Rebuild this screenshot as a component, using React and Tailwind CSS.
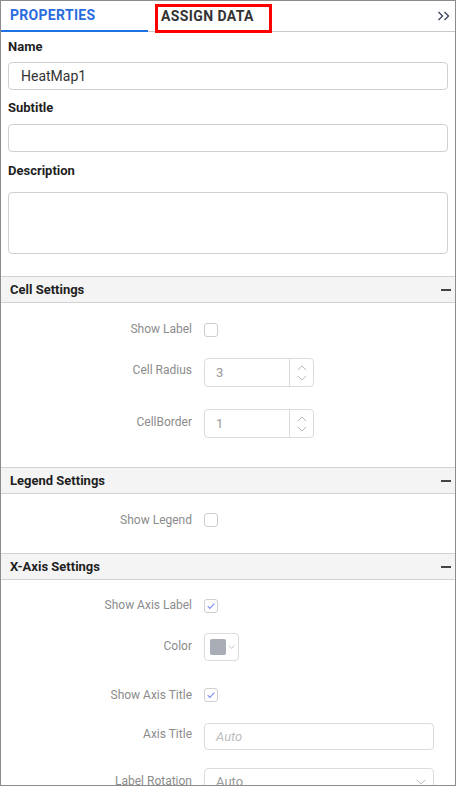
import React from "react";

const font = { fontFamily: "Roboto, 'Liberation Sans', sans-serif" };

const Chevron = ({ dir = "down", className = "" }) => (
  <svg viewBox="0 0 12 7" className={className} fill="none" stroke="currentColor" strokeWidth="1">
    {dir === "down" ? <path d="M1 1l5 5 5-5" /> : <path d="M1 6l5-5 5 5" />}
  </svg>
);

const SectionHeader = ({ title }) => (
  <div className="h-[27px] flex items-center justify-between bg-[#f4f4f4] border-y border-[#d2d2d2] pl-[9px] pr-[4px]">
    <span className="text-[13px] font-bold text-[#1f1f1f]">{title}</span>
    <span className="w-[10px] h-[2px] bg-[#444]" />
  </div>
);

const Row = ({ label, lift = 0, mt, children }) => (
  <div className={`flex items-center ${mt}`}>
    <div
      className="w-[191px] text-right text-[12px] text-[#8c8c8c] leading-[16px]"
      style={{ marginTop: -lift }}
    >
      {label}
    </div>
    <div className="ml-[12px]">{children}</div>
  </div>
);

const Checkbox = ({ checked }) => (
  <div className="w-[14px] h-[14px] rounded-[3px] border border-[#cfcfcf] bg-white flex items-center justify-center">
    {checked && (
      <svg viewBox="0 0 12 12" className="w-[10px] h-[10px]" fill="none" stroke="#7d8ff2" strokeWidth="1.4">
        <path d="M2 6.2l2.6 2.6L10 3.2" />
      </svg>
    )}
  </div>
);

const NumberBox = ({ value }) => (
  <div className="w-[110px] h-[29px] rounded-[4px] border border-[#dcdcdc] flex">
    <div className="flex-1 flex items-center pl-[11px] text-[13px] text-[#9a9a9a]">{value}</div>
    <div className="w-[24px] border-l border-[#dcdcdc] flex flex-col items-center justify-center gap-[4px] text-[#a8a8a8]">
      <Chevron dir="up" className="w-[10px] h-[6px]" />
      <Chevron dir="down" className="w-[10px] h-[6px]" />
    </div>
  </div>
);

export default function App() {
  return (
    <div
      className="w-[456px] h-[786px] border border-[#8c8c8c] bg-white overflow-hidden relative"
      style={font}
    >
      {/* Tabs */}
      <div className="h-[31px] flex items-stretch border-b border-[#c9c9c9]">
        <div className="w-[147px] flex items-center pl-[9px] border-b-2 border-[#1f6fe5] -mb-px">
          <span className="text-[14px] font-bold text-[#2a6ce0] tracking-[0.3px]">PROPERTIES</span>
        </div>
        <div className="flex items-center pl-[13px]">
          <span className="text-[14px] font-bold text-[#333] tracking-[0.4px]">ASSIGN DATA</span>
        </div>
        <div className="flex-1" />
        <div className="flex items-center pr-[4px] text-[#3d4b63]">
          <svg viewBox="0 0 14 10" className="w-[14px] h-[10px]" fill="none" stroke="currentColor" strokeWidth="1.4">
            <path d="M1.5 1l4 4-4 4M7.5 1l4 4-4 4" />
          </svg>
        </div>
      </div>
      <div className="absolute left-[154px] top-[3px] w-[117px] h-[29px] border-[3px] border-[#ff0000]" />

      {/* General */}
      <div className="px-[7px]">
        <div className="mt-[7px] text-[13px] font-bold text-[#1f1f1f] leading-[16px]">Name</div>
        <div className="mt-[7px] h-[28px] rounded-[4px] border border-[#d0d0d0] flex items-center pl-[12px] text-[14px] text-[#333]">
          HeatMap1
        </div>
        <div className="mt-[10px] text-[13px] font-bold text-[#1f1f1f] leading-[16px]">Subtitle</div>
        <div className="mt-[8px] h-[28px] rounded-[4px] border border-[#d0d0d0]" />
        <div className="mt-[11px] text-[13px] font-bold text-[#1f1f1f] leading-[16px]">Description</div>
        <div className="mt-[13px] h-[62px] rounded-[4px] border border-[#d0d0d0]" />
      </div>

      {/* Cell Settings */}
      <div className="mt-[22px]">
        <SectionHeader title="Cell Settings" />
        <div className="pb-[29px]">
          <Row label="Show Label" mt="mt-[19px]" lift={1}>
            <Checkbox />
          </Row>
          <Row label="Cell Radius" mt="mt-[21px]" lift={6}>
            <NumberBox value="3" />
          </Row>
          <Row label="CellBorder" mt="mt-[22px]" lift={4}>
            <NumberBox value="1" />
          </Row>
        </div>
      </div>

      {/* Legend Settings */}
      <SectionHeader title="Legend Settings" />
      <div className="pb-[25px]">
        <Row label="Show Legend" mt="mt-[18px]" lift={0}>
          <Checkbox />
        </Row>
      </div>

      {/* X-Axis Settings */}
      <SectionHeader title="X-Axis Settings" />
      <div>
        <Row label="Show Axis Label" mt="mt-[19px]" lift={2}>
          <Checkbox checked />
        </Row>
        <Row label="Color" mt="mt-[20px]" lift={3}>
          <div className="w-[35px] h-[28px] rounded-[4px] border border-[#dcdcdc] flex items-center pl-[5px] gap-[2px]">
            <div className="w-[16px] h-[16px] rounded-[2px] bg-[#a9adb5]" />
            <Chevron className="w-[7px] h-[4px] text-[#9a9a9a]" />
          </div>
        </Row>
        <Row label="Show Axis Title" mt="mt-[26px]" lift={0}>
          <Checkbox checked />
        </Row>
        <Row label="Axis Title" mt="mt-[20px]" lift={5}>
          <div className="w-[230px] h-[27px] rounded-[4px] border border-[#dcdcdc] flex items-center pl-[11px] text-[13px] italic text-[#bdbdbd]">
            Auto
          </div>
        </Row>
        <Row label="Label Rotation" mt="mt-[18px]" lift={3}>
          <div className="w-[230px] h-[28px] rounded-[4px] border border-[#dcdcdc] flex items-center justify-between pl-[11px] pr-[6px] text-[13px] text-[#9a9a9a]">
            <span>Auto</span>
            <Chevron className="w-[12px] h-[6px] text-[#aaa]" />
          </div>
        </Row>
      </div>
    </div>
  );
}
